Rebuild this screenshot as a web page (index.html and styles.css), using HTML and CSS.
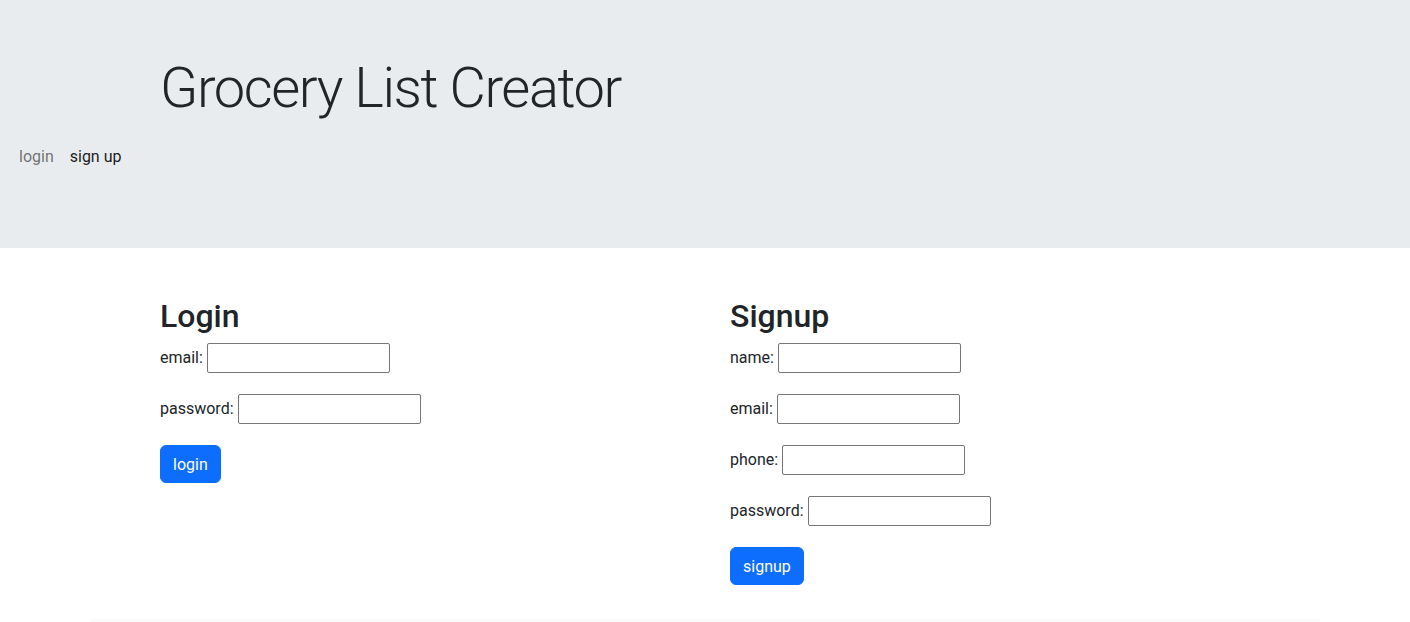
FILE: index.html
```html
<!DOCTYPE html>
<html lang="en">
<head>
<meta charset="utf-8">
<title>Grocery List Creator</title>
<link rel="stylesheet" href="styles.css">
</head>
<body>
<header class="hero">
  <h1 class="hero-title">Grocery List Creator</h1>
  <nav class="nav">
    <a class="nav-link" href="#">login</a>
    <a class="nav-link active" href="#">sign up</a>
  </nav>
</header>
<main class="forms">
  <section class="form-col">
    <h2 class="form-title">Login</h2>
    <form class="form">
      <label class="field">email: <input class="input" type="text"></label>
      <label class="field">password: <input class="input" type="password"></label>
      <button class="btn" type="button">login</button>
    </form>
  </section>
  <section class="form-col">
    <h2 class="form-title">Signup</h2>
    <form class="form">
      <label class="field">name: <input class="input" type="text"></label>
      <label class="field">email: <input class="input" type="text"></label>
      <label class="field">phone: <input class="input" type="text"></label>
      <label class="field">password: <input class="input" type="password"></label>
      <button class="btn" type="button">signup</button>
    </form>
  </section>
</main>
<div class="footer-edge"></div>
</body>
</html>
```
FILE: styles.css
```css
* { box-sizing: border-box; }
html, body { margin: 0; padding: 0; }
body {
  font-family: Roboto, "Liberation Sans", sans-serif;
  font-size: 16px;
  line-height: 1.5;
  color: #212529;
  background: #fff;
}
.hero {
  background: #e9ecef;
  height: 248px;
  padding-top: 55px;
}
.hero-title {
  margin: 0 0 0 160px;
  font-size: 56px;
  font-weight: 300;
  line-height: 67px;
  letter-spacing: -1.4px;
}
.nav {
  display: flex;
  padding-left: 11px;
  margin-top: 23px;
}
.nav-link {
  padding: 0 8px;
  color: rgba(0,0,0,0.55);
  text-decoration: none;
  line-height: 24px;
}
.nav-link.active { color: rgba(0,0,0,0.9); }
.forms {
  display: flex;
  padding: 49px 0 0 160px;
}
.form-col { width: 570px; }
.form-title {
  margin: 0 0 8px;
  font-size: 32px;
  font-weight: 500;
  line-height: 38px;
}
.form {
  display: flex;
  flex-direction: column;
  align-items: flex-start;
  gap: 21px;
}
.field {
  display: flex;
  align-items: center;
  height: 30px;
  gap: 4px;
}
.input {
  width: 183px;
  height: 30px;
  border: 1px solid #767676;
  border-radius: 2px;
  font: inherit;
  background: #fff;
}
.btn {
  font: inherit;
  color: #fff;
  background: #0d6efd;
  border: 1px solid #0d6efd;
  border-radius: 6px;
  padding: 7px 12px 5px;
  line-height: 24px;
}
.footer-edge {
  margin: 34px 90px 0;
  height: 4px;
  background: #fbfbfb;
}
```
